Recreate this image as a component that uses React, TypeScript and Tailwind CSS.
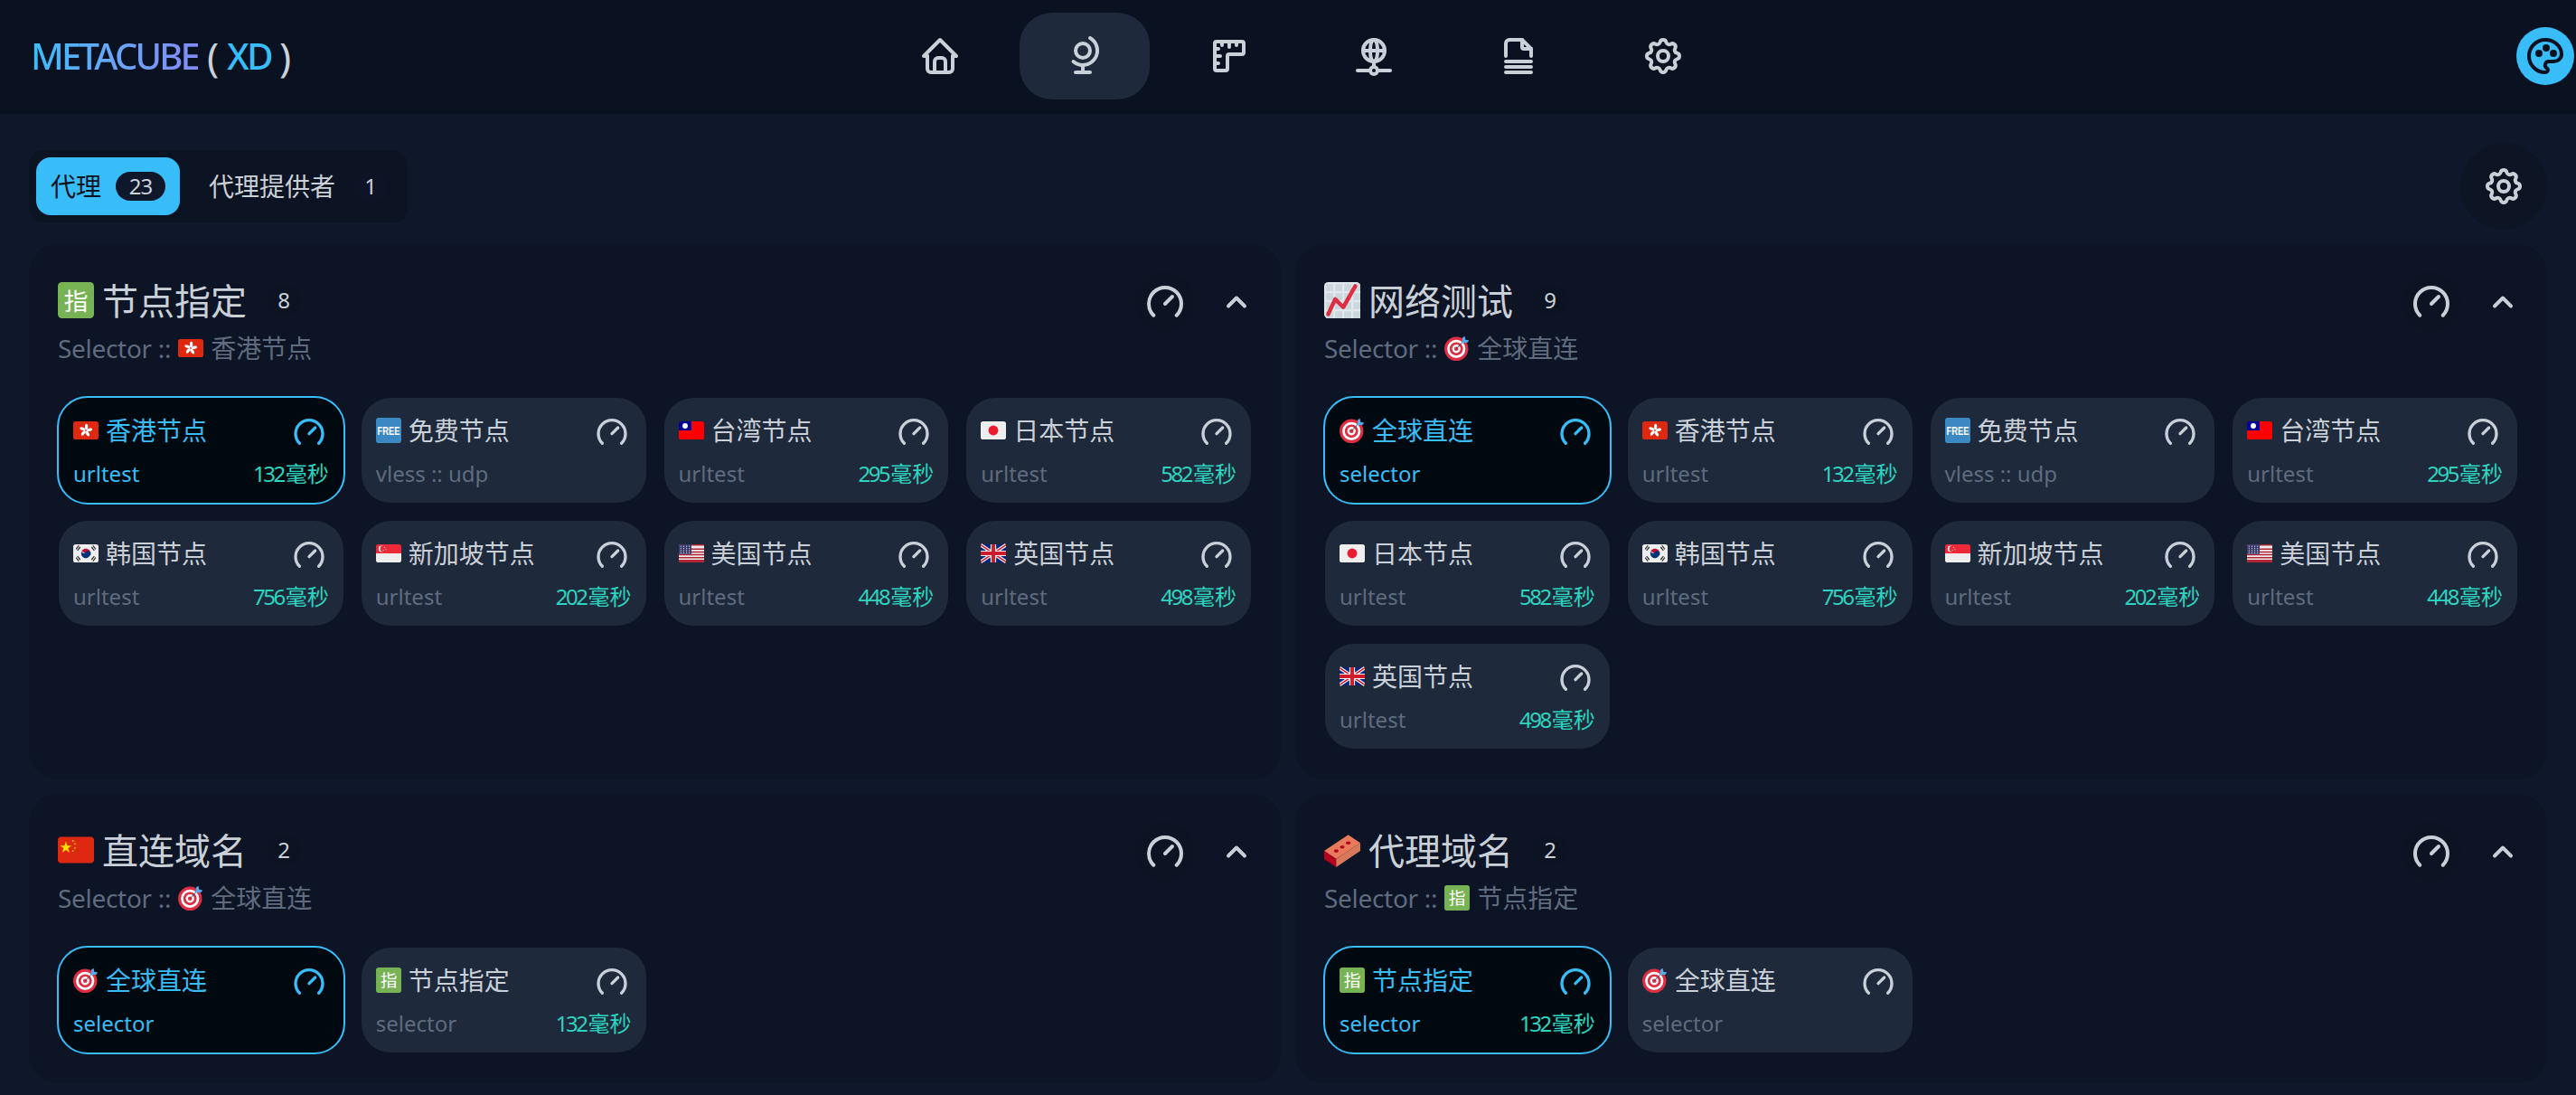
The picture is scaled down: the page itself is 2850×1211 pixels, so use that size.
import React from 'react';
import {
  TbBrandSpeedtest,
  TbChevronUp,
  TbFileStack,
  TbGlobe,
  TbHome,
  TbNetwork,
  TbPalette,
  TbRuler,
  TbSettings,
} from 'react-icons/tb';

type EmojiName = 'hk' | 'free' | 'tw' | 'jp' | 'kr' | 'sg' | 'us' | 'uk' | 'cn' | 'target' | 'chart' | 'brick' | 'zhi';

function FlagBase({ fill, children }: { fill: string; children?: React.ReactNode }) {
  return (
    <>
      <rect x="0" y="5" width="36" height="26" rx="3.5" fill={fill} />
      {children}
    </>
  );
}

function emojiShape(name: EmojiName) {
  switch (name) {
    case 'hk':
      return (
        <FlagBase fill="#DE2910">
          {[0, 72, 144, 216, 288].map(r => (
            <ellipse key={r} cx="18.8" cy="13" rx="2.1" ry="4.2" fill="#fff" transform={`rotate(${r} 18 18)`} />
          ))}
        </FlagBase>
      );
    case 'free':
      return (
        <>
          <rect x="0" y="0" width="36" height="36" rx="4" fill="#3B88C3" />
          <text transform="translate(18 24) scale(1 1.35)" textAnchor="middle" fontSize="12" fontWeight="700" fill="#fff" fontFamily="'Liberation Sans', sans-serif">FREE</text>
        </>
      );
    case 'tw':
      return (
        <FlagBase fill="#FE0000">
          <path d="M0 8.5A3.5 3.5 0 0 1 3.5 5H18v13H0z" fill="#000095" />
          <circle cx="9" cy="11.5" r="3.8" fill="#fff" />
        </FlagBase>
      );
    case 'jp':
      return (
        <FlagBase fill="#EEEEEE">
          <circle cx="18" cy="18" r="7" fill="#ED1B2F" />
        </FlagBase>
      );
    case 'kr':
      return (
        <FlagBase fill="#EEEEEE">
          <path d="M12 15a6.5 6.5 0 0 1 12 6z" fill="#C60C30" />
          <path d="M24 21a6.5 6.5 0 0 1-12-6 3.2 3.2 0 0 0 6 1 3.2 3.2 0 0 1 6 5z" fill="#003478" />
          <path d="M4 12l4-5M6 14l4-5M26 9l4 5M28 7l4 5M4 24l4 5M6 22l4 5M26 27l4-5M28 29l4-5" stroke="#333" strokeWidth="1.6" />
        </FlagBase>
      );
    case 'sg':
      return (
        <>
          <path d="M0 18V8.5A3.5 3.5 0 0 1 3.5 5h29A3.5 3.5 0 0 1 36 8.5V18z" fill="#ED2939" />
          <path d="M0 18h36v9.5a3.5 3.5 0 0 1-3.5 3.5h-29A3.5 3.5 0 0 1 0 27.5z" fill="#EEEEEE" />
          <circle cx="8" cy="11.5" r="4.4" fill="#fff" />
          <circle cx="9.8" cy="11.5" r="4" fill="#ED2939" />
          <circle cx="12" cy="9.5" r="0.7" fill="#fff" />
          <circle cx="14" cy="12.5" r="0.7" fill="#fff" />
          <circle cx="10.5" cy="13.5" r="0.7" fill="#fff" />
        </>
      );
    case 'us':
      return (
        <FlagBase fill="#EEEEEE">
          <path d="M3.5 5h29A3.5 3.5 0 0 1 36 7H0a3.5 3.5 0 0 1 3.5-2zM0 11h36v2H0zM0 15h36v2H0zM0 19h36v2H0zM0 23h36v2H0zM0 27h36v2H0zM0 29h36a3.5 3.5 0 0 1-3.5 2h-29A3.5 3.5 0 0 1 0 29z" fill="#B22334" />
          <path d="M0 8.5A3.5 3.5 0 0 1 3.5 5H18v14H0z" fill="#3C3B6E" />
          {[8, 11, 14, 17].flatMap(y => [3, 7, 11, 15].map(x => <circle key={`${x}-${y}`} cx={x} cy={y} r="0.8" fill="#ddd" />))}
        </FlagBase>
      );
    case 'uk':
      return (
        <FlagBase fill="#00247D">
          <path d="M0 6l36 24M36 6L0 30" stroke="#EEEEEE" strokeWidth="5" />
          <path d="M0 6l36 24M36 6L0 30" stroke="#CF1B2B" strokeWidth="2" />
          <path d="M18 5v26M0 18h36" stroke="#EEEEEE" strokeWidth="8" />
          <path d="M18 5v26M0 18h36" stroke="#CF1B2B" strokeWidth="5" />
        </FlagBase>
      );
    case 'cn':
      return (
        <FlagBase fill="#DE2910">
          <path d="M8 9.5l1.4 4.2h4.4l-3.6 2.6 1.4 4.2L8 17.9l-3.6 2.6 1.4-4.2-3.6-2.6h4.4z" fill="#FFDE02" />
          <circle cx="15" cy="9" r="0.8" fill="#FFDE02" />
          <circle cx="17" cy="12" r="0.8" fill="#FFDE02" />
          <circle cx="17" cy="16" r="0.8" fill="#FFDE02" />
          <circle cx="15" cy="19" r="0.8" fill="#FFDE02" />
        </FlagBase>
      );
    case 'target':
      return (
        <>
          <circle cx="17" cy="19" r="17" fill="#DD2E44" />
          <circle cx="17" cy="19" r="13" fill="#fff" />
          <circle cx="17" cy="19" r="9.5" fill="#DD2E44" />
          <circle cx="17" cy="19" r="6" fill="#fff" />
          <circle cx="17" cy="19" r="3" fill="#DD2E44" />
          <path d="M17 19L28 7" stroke="#3B4F5E" strokeWidth="1.2" />
          <path d="M25 10l1-8 3-2 1 5 5 1-2 3-8 1z" fill="#55ACEE" transform="translate(0 1)" />
        </>
      );
    case 'chart':
      return (
        <>
          <rect x="0" y="0" width="36" height="36" rx="4" fill="#E1E8ED" />
          {[3, 12, 21, 30].flatMap(x => [3, 12, 21, 30].map(y => <rect key={`${x}-${y}`} x={x - 1} y={y - 1} width="7" height="7" fill="#CCD6DD" />))}
          <path d="M4 32l7-15 8 8L31 4" fill="none" stroke="#DD2E44" strokeWidth="4" strokeLinecap="round" strokeLinejoin="round" />
        </>
      );
    case 'brick':
      return (
        <>
          <path d="M0 19L24 3l12 8L12 27z" fill="#E8795B" />
          <path d="M0 19l12 8v8L0 27z" fill="#B5001E" />
          <path d="M12 27l24-16v8L12 35z" fill="#D9785A" />
          <ellipse cx="12" cy="19" rx="2.4" ry="1.6" fill="#B5001E" />
          <ellipse cx="18" cy="15" rx="2.4" ry="1.6" fill="#B5001E" />
          <ellipse cx="24" cy="11" rx="2.4" ry="1.6" fill="#B5001E" />
        </>
      );
    case 'zhi':
      return (
        <>
          <rect x="0" y="0" width="36" height="36" rx="4" fill="#77B255" />
          <text x="18" y="27.5" textAnchor="middle" fontSize="24" fill="#fff" fontFamily="'Noto Sans CJK SC', sans-serif">指</text>
        </>
      );
  }
}

function Emoji({ name, size }: { name: EmojiName; size: number }) {
  return (
    <svg width={size} height={size} viewBox="0 0 36 36" className="shrink-0">
      {emojiShape(name)}
    </svg>
  );
}

type Proxy = { emoji: EmojiName; name: string; type: string; delay?: number };

const hk: Proxy = { emoji: 'hk', name: '香港节点', type: 'urltest', delay: 132 };
const free: Proxy = { emoji: 'free', name: '免费节点', type: 'vless :: udp' };
const tw: Proxy = { emoji: 'tw', name: '台湾节点', type: 'urltest', delay: 295 };
const jp: Proxy = { emoji: 'jp', name: '日本节点', type: 'urltest', delay: 582 };
const kr: Proxy = { emoji: 'kr', name: '韩国节点', type: 'urltest', delay: 756 };
const sg: Proxy = { emoji: 'sg', name: '新加坡节点', type: 'urltest', delay: 202 };
const us: Proxy = { emoji: 'us', name: '美国节点', type: 'urltest', delay: 448 };
const uk: Proxy = { emoji: 'uk', name: '英国节点', type: 'urltest', delay: 498 };
const direct: Proxy = { emoji: 'target', name: '全球直连', type: 'selector' };
const pick: Proxy = { emoji: 'zhi', name: '节点指定', type: 'selector', delay: 132 };

type Group = { emoji: EmojiName; name: string; count: number; nowEmoji: EmojiName; now: string; proxies: Proxy[] };

const groups: Group[] = [
  { emoji: 'zhi', name: '节点指定', count: 8, nowEmoji: 'hk', now: '香港节点', proxies: [hk, free, tw, jp, kr, sg, us, uk] },
  { emoji: 'chart', name: '网络测试', count: 9, nowEmoji: 'target', now: '全球直连', proxies: [direct, hk, free, tw, jp, kr, sg, us, uk] },
  { emoji: 'cn', name: '直连域名', count: 2, nowEmoji: 'target', now: '全球直连', proxies: [direct, pick] },
  { emoji: 'brick', name: '代理域名', count: 2, nowEmoji: 'zhi', now: '节点指定', proxies: [pick, direct] },
];

function ProxyCard({ proxy, active }: { proxy: Proxy; active: boolean }) {
  return (
    <div className={`h-[116px] rounded-[32px] px-4 pt-4 ${active ? 'bg-[#00090f] outline-2 outline-[#38bdf8]' : 'bg-[#1e293b]'}`}>
      <div className="flex h-10 items-center justify-between">
        <div className={`flex items-center gap-2 text-[28px] leading-10 ${active ? 'text-[#38bdf8]' : 'text-[#cad0d8]'}`}>
          <Emoji name={proxy.emoji} size={28} />
          <span>{proxy.name}</span>
        </div>
        <TbBrandSpeedtest size={40} className={`mr-[2px] mt-1 ${active ? 'text-[#38bdf8]' : 'text-[#cad0d8]'}`} />
      </div>
      <div className="mt-3 flex h-8 items-center justify-between text-2xl leading-8">
        <span className={active ? 'text-[#38bdf8]' : 'text-[#5f6b7e]'}>{proxy.type}</span>
        {proxy.delay !== undefined && (
          <span className="text-[#2dd4bf]">
            <span className="tracking-[-2.5px]">{proxy.delay}</span>
            <span className="ml-[2px]">毫秒</span>
          </span>
        )}
      </div>
    </div>
  );
}

function GroupPanel({ group }: { group: Group }) {
  return (
    <section className="rounded-[32px] bg-[#0d1425] px-8 pt-8 pb-[34px]">
      <div className="flex items-start justify-between">
        <div>
          <div className="flex h-[60px] items-center">
            <Emoji name={group.emoji} size={40} />
            <span className="ml-[9px] pt-[2px] text-[40px] leading-[60px] text-[#cad0d8]">{group.name}</span>
            <span className="ml-[22px] flex h-8 w-[38px] items-center justify-center rounded-full bg-[#0c1322] text-2xl leading-8 text-[#cad0d8]">{group.count}</span>
          </div>
          <div className="mt-[3px] flex h-10 items-center text-[28px] leading-10 text-[#5f6b7e]">
            <span className="tracking-[-0.3px]">Selector ::</span>
            <span className="mx-2"><Emoji name={group.nowEmoji} size={28} /></span>
            <span>{group.now}</span>
          </div>
        </div>
        <div className="flex h-[60px] items-center">
          <span className="mt-1 flex h-16 w-16 items-center justify-center rounded-full bg-[#0c1322]">
            <TbBrandSpeedtest size={48} className="text-[#cad0d8]" />
          </span>
          <TbChevronUp size={36} strokeWidth={2.6} className="ml-[29px] -mr-px mt-1 text-[#cad0d8]" />
        </div>
      </div>
      <div className="mx-px mt-[35px] grid grid-cols-4 gap-5">
        {group.proxies.map((p, i) => (
          <ProxyCard key={p.name} proxy={p} active={i === 0} />
        ))}
      </div>
    </section>
  );
}

const navIcons = [TbHome, TbGlobe, TbRuler, TbNetwork, TbFileStack, TbSettings];

export default function App() {
  return (
    <div className="h-[1211px] w-[2850px] overflow-hidden bg-[#0f172a] [font-family:'Noto_Sans','Noto_Sans_CJK_SC',sans-serif]">
      <header className="flex h-[126px] items-center bg-[#0a1120] pb-[2px] pl-[34px] pr-[2px]">
        <div className="flex w-[934px] items-center text-[40px] font-medium leading-[60px]">
          <span className="bg-gradient-to-r from-[#38bdf8] to-[#818cf8] bg-clip-text tracking-[-2.8px] text-transparent">METACUBE</span>
          <span className="ml-[10px] text-[44px] font-normal text-[#cad0d8]">(</span>
          <span className="ml-[9px] tracking-[-2.5px] text-[#38bdf8]">XD</span>
          <span className="ml-[9px] text-[44px] font-normal text-[#cad0d8]">)</span>
        </div>
        <nav className="flex gap-4">
          {navIcons.map((Icon, i) => (
            <span key={i} className={`flex h-24 w-36 items-center justify-center rounded-[36px] text-[#cad0d8] ${i === 1 ? 'bg-[#1e293b]' : ''}`}>
              <Icon size={48} />
            </span>
          ))}
        </nav>
        <span className="ml-auto flex h-16 w-16 items-center justify-center rounded-full bg-[#38bdf8] text-[#0a1120]">
          <TbPalette size={48} />
        </span>
      </header>
      <main className="px-8 pt-8">
        <div className="mb-4 flex h-24 items-center justify-between">
          <div className="flex items-center gap-4 rounded-2xl bg-[#0c1322] p-2 text-[28px] leading-10">
            <div className="flex h-16 items-center gap-4 rounded-2xl bg-[#38bdf8] px-4 text-[#0a1120]">
              <span>代理</span>
              <span className="flex h-8 w-[55px] items-center justify-center rounded-full bg-[#0f172a] text-2xl tracking-[-1px] text-[#cad0d8]">23</span>
            </div>
            <div className="flex h-16 items-center gap-5 pl-4 pr-[14px] text-[#cad0d8]">
              <span>代理提供者</span>
              <span className="flex h-8 w-[38px] items-center justify-center rounded-full bg-[#0d1425] text-2xl">1</span>
            </div>
          </div>
          <span className="flex h-24 w-24 items-center justify-center rounded-full bg-[#0d1424] text-[#cad0d8]">
            <TbSettings size={48} />
          </span>
        </div>
        <div className="grid grid-cols-2 gap-4">
          {groups.map(g => (
            <GroupPanel key={g.name} group={g} />
          ))}
        </div>
      </main>
    </div>
  );
}
